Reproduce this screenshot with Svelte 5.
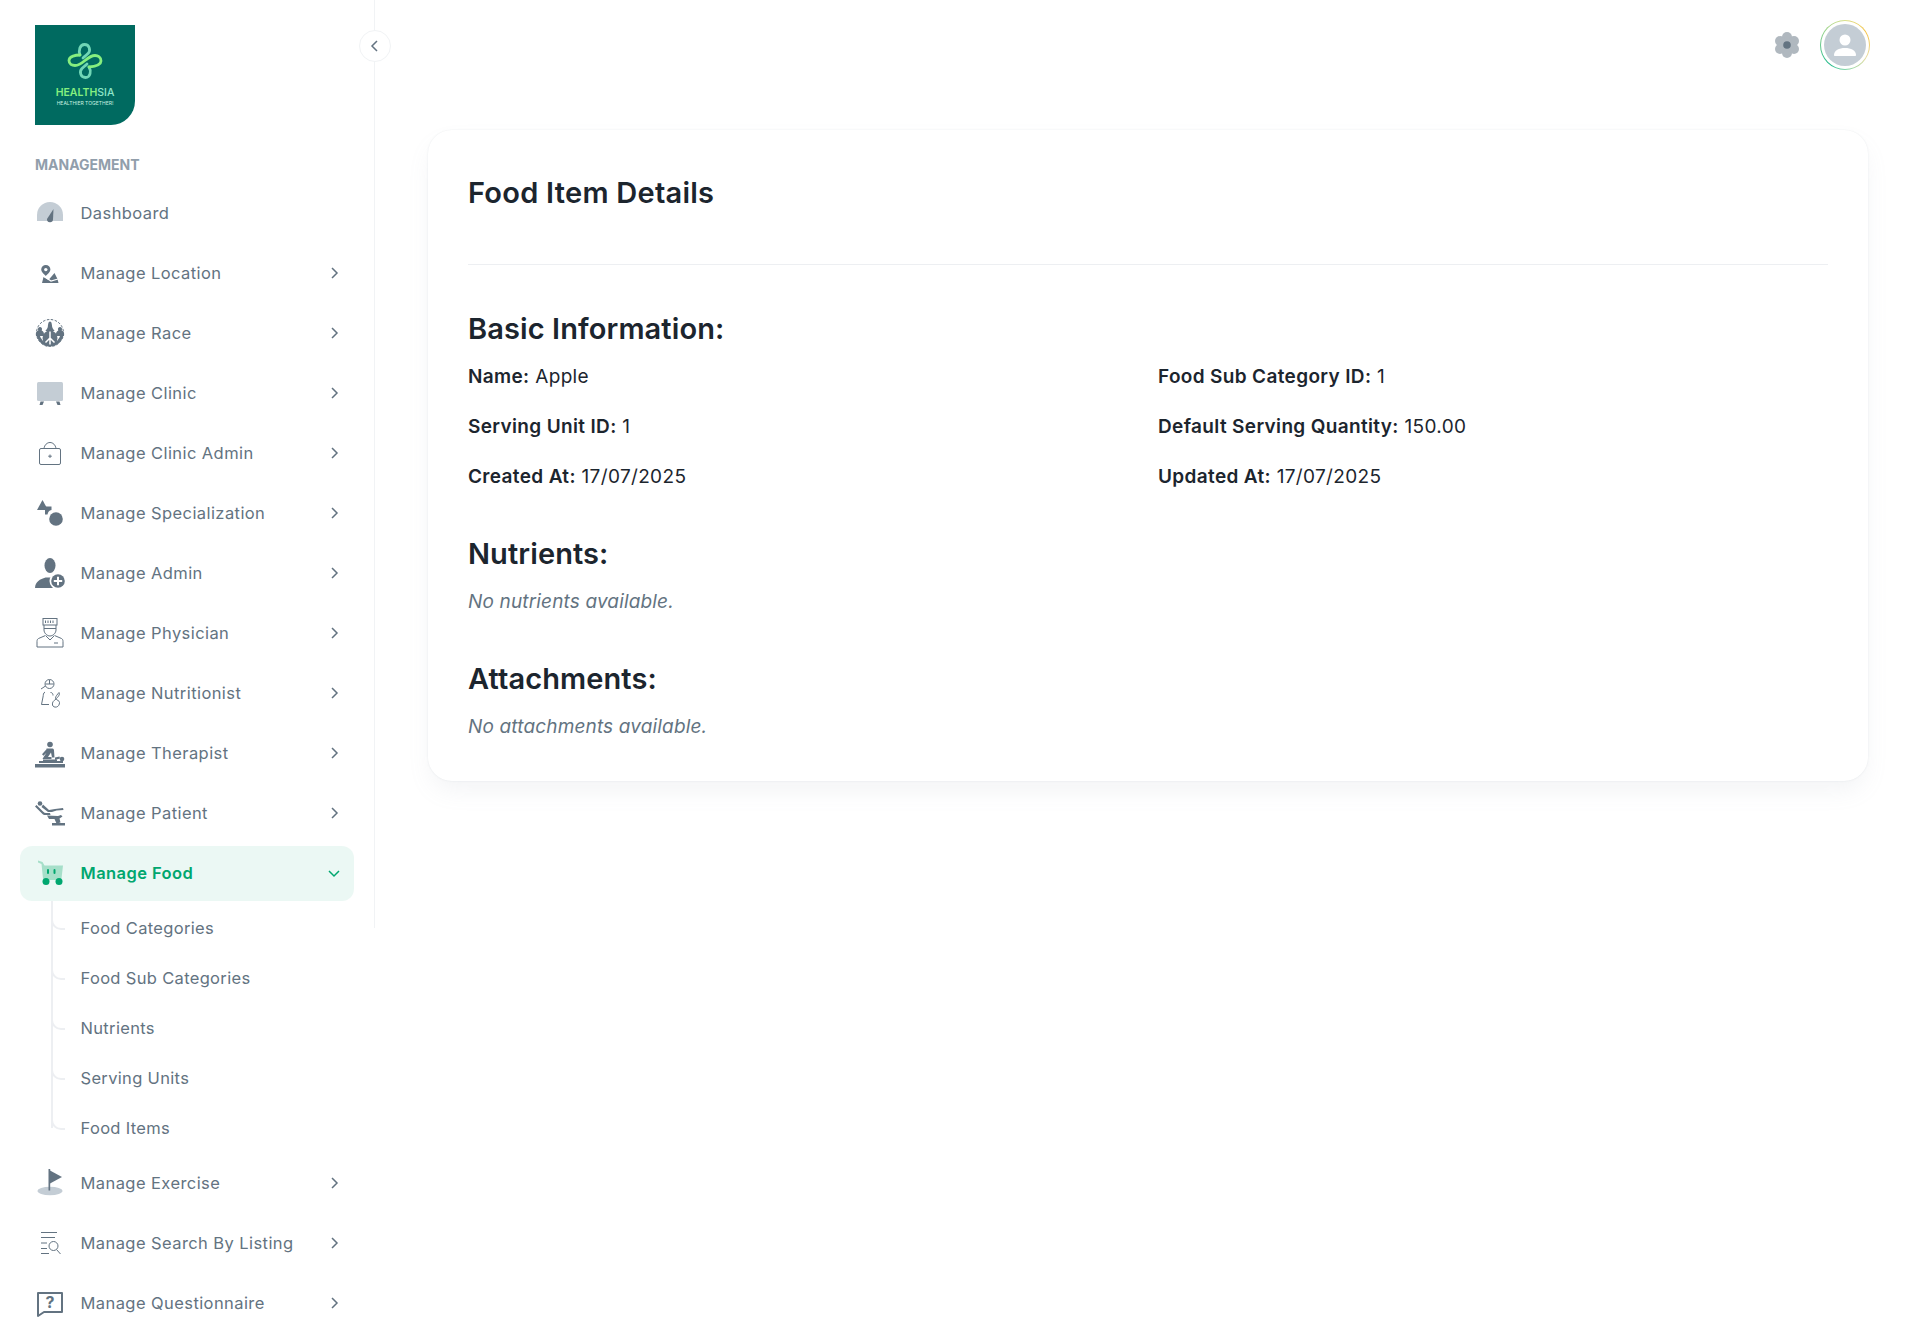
<script>
  // viewBox 0 0 30 30 for all of them, gray = duotone part, dark = main tone
  const dark = '#637381';
  const gray = '#c4cdd5';
  const icons = {
    dashboard: `<path d="M2 23v-6a13 13 0 0 1 26 0v6z" fill="${gray}"/><path d="M18.5 11l-.5 10.500a3 3 0 1 1-6-.5z" fill="${dark}"/>`,
    location: `<path d="M7 25l1.500-6 5 3 6-7 3 6 1 4z" fill="${dark}"/><path d="M10.800 7a4.600 4.600 0 0 0-4.600 4.600c0 2.800 4.600 6.400 4.600 6.400s4.600-3.600 4.600-6.400A4.600 4.600 0 0 0 10.800 7z" fill="${dark}"/><circle cx="10.800" cy="11.600" r="1.700" fill="#fff"/><path d="M7 17l9 6 7-2" fill="none" stroke="#fff" stroke-width="1.200"/>`,
    race: `<circle cx="15" cy="15" r="13.500" fill="none" stroke="${dark}" stroke-width="1" stroke-dasharray="2.500 1.500"/><path d="M1.500 15a13.500 13.500 0 0 0 27 0h-3a10.500 10.500 0 0 1-21 0z" fill="${dark}"/><path d="M10.500 13c0-1 2-2 2.300-4 .3-2.500.5-5.500 2.200-5.500s1.900 3 2.200 5.500c.3 2 2.300 3 2.300 4z" fill="${dark}"/><path d="M1 18c-.5-3 0-4.500 2.300-5.500-1-2 .3-3.500 1.700-3.500s2.700 1.500 1.700 3.500c1.800.7 2.500 2 2.300 5.500zM29 18c.5-3 0-4.500-2.300-5.500 1-2-.3-3.500-1.700-3.500s-2.700 1.500-1.700 3.500c-1.800.7-2.500 2-2.300 5.500z" fill="${dark}"/><circle cx="15" cy="20" r="7.500" fill="${dark}"/><path d="M15 13.500v13M15 20l-4.500 4.500M15 20l4.500 4.500" stroke="#fff" stroke-width="1.500" fill="none"/>`,
    clinic: `<rect x="2" y="4" width="26" height="19" rx="1.500" fill="${gray}"/><path d="M5.500 23.500h3.500l-1.500 3.500h-3zM21 23.500h3.500l1 3.500h-3z" fill="${dark}"/>`,
    clinicAdmin: `<rect x="4.500" y="10.500" width="21" height="16" rx="1.500" fill="none" stroke="${dark}" stroke-width="1"/><path d="M9 10.500c.5-3.500 3-6 6-6s5.500 2.500 6 6" fill="none" stroke="${dark}" stroke-width="1"/><path d="M15 16.500v3.500M13.200 18.200h3.600" stroke="${dark}" stroke-width="1"/>`,
    specialization: `<path d="M7.500 2l5.500 10H2z" fill="${dark}"/><path d="M10 8.500h6.500v3.500c-2.500.5-3.500 2-4 4.500H10z" fill="${dark}"/><circle cx="21" cy="21" r="6.800" fill="${dark}"/>`,
    admin: `<ellipse cx="15" cy="7.500" rx="5.500" ry="7.500" fill="${dark}"/><path d="M0 30c.5-7 5-8.500 10.500-10.500h9L24 21v9z" fill="${dark}"/><circle cx="23" cy="23" r="8.500" fill="#fff"/><circle cx="23" cy="23" r="6.800" fill="${dark}"/><path d="M23 18.800v8.400M18.800 23h8.400" stroke="#fff" stroke-width="2"/>`,
    physician: `<g fill="none" stroke="${dark}" stroke-width="1"><rect x="8" y=".5" width="14" height="6.500"/><path d="M10.500 2.500v2.500M13 2.500v2.500M15.500 2.500v2.500M18 2.500v2.500"/><path d="M9 7v5c0 3 3 6 6 6s6-3 6-6V7"/><path d="M9 10.500h12"/><path d="M10.500 17.500L3.500 20.500c-1 .5-1.500 1.500-1.500 3v5.500h26v-5.500c0-1.500-.5-2.500-1.500-3l-7-3"/><path d="M11 18l4 4 4-4M19 25h4"/></g>`,
    nutritionist: `<g fill="none" stroke="${dark}" stroke-width="1"><circle cx="14.500" cy="6" r="4.500"/><path d="M10.500 6h8M10.500 8l-4.500 3M14.500 2v4"/><path d="M10 14c-2 1-1.500 3-2 5l-1.500 7.500H14"/><path d="M15.500 14.500c2 0 2.500 1.500 2.500 3"/><path d="M24 14.500c1.500 2-1.500 5-3 6.500-2.500 2-4 3-3.500 6 .3 1.500 2 2.500 4 2 2-.5 3-2.500 3-4.500 0-2-2.500-2-4-4 0-2.500 2-4 3.500-6z"/></g>`,
    therapist: `<circle cx="15" cy="6.500" r="2.800" fill="${dark}"/><path d="M11.500 10.500h6c1 0 1.500 1 1.500 2l.5 7h-2.500l-1-5-3 4.500h3.500v2H7.500l1-1.700 3-4.500-3 3-1.500-1.500 4.500-5z" fill="${dark}"/><path d="M8 21.500h14v2H8z" fill="${dark}"/><circle cx="27" cy="21" r="2.300" fill="${dark}"/><path d="M20 19.500l4.500-1 .5 2-5 1.500z" fill="${dark}"/><path d="M0 26h30v3.500H0z" fill="${dark}"/><path d="M4 23h24v2H4z" fill="${dark}"/>`,
    patient: `<circle cx="5" cy="5.500" r="2.300" fill="${dark}"/><path d="M0 8.500l7 7c1 1 2 1.500 3.500 1.500h5l-.5-2h-4c-1 0-2-.5-3-1.500L1.500 7z" fill="${dark}"/><path d="M8 6.500L14 12l6-1 8-1 .5 2-7 .5L17 14h-4L6.500 9z" fill="${dark}"/><path d="M12 17.500l11 .5 3-1 1.500 1.500-3 2 1 4-4 1-2-4.500H14z" fill="${dark}"/><path d="M17 25h13v2.500H17z" fill="${dark}"/>`,
    food: `<path d="M3 2.500l4.500 1.500 2 3.500H28l-1.500 13c-.1 1-1 1.500-2 1.500H10c-1 0-1.700-.6-2-1.500L6.500 6 3 4.500z" fill="#a6dfc9"/><rect x="12" y="11" width="2" height="5" rx="1" fill="#00a76f"/><rect x="18.500" y="11" width="2" height="5" rx="1" fill="#00a76f"/><circle cx="11" cy="23.500" r="3.500" fill="#00a76f"/><circle cx="24" cy="23.500" r="3.500" fill="#00a76f"/>`,
    exercise: `<ellipse cx="15" cy="23" rx="12.500" ry="4.200" fill="${gray}"/><rect x="13.500" y="1" width="1.700" height="21.500" fill="${dark}"/><path d="M15 2.500l12 6.500-12 6.500z" fill="${dark}"/>`,
    listing: `<g fill="none" stroke="${dark}" stroke-width="1"><path d="M6 4.500h16M6 9.500h14M6 15h6M6 20.500h6M6 25.500h8"/><circle cx="18.500" cy="18" r="4.500" fill="#fff"/><path d="M21.500 21.500l4 4.500"/></g>`,
    question: `<path d="M3 5h24v19H9l-6 4z" fill="none" stroke="${dark}" stroke-width="2" stroke-linejoin="round"/><text x="15" y="19.500" text-anchor="middle" font-size="16" font-weight="700" font-family="Inter, sans-serif" fill="${dark}">?</text>`
  };

  const topItems = [
    { label: 'Dashboard', icon: 'dashboard', plain: true },
    { label: 'Manage Location', icon: 'location' },
    { label: 'Manage Race', icon: 'race' },
    { label: 'Manage Clinic', icon: 'clinic' },
    { label: 'Manage Clinic Admin', icon: 'clinicAdmin' },
    { label: 'Manage Specialization', icon: 'specialization' },
    { label: 'Manage Admin', icon: 'admin' },
    { label: 'Manage Physician', icon: 'physician' },
    { label: 'Manage Nutritionist', icon: 'nutritionist' },
    { label: 'Manage Therapist', icon: 'therapist' },
    { label: 'Manage Patient', icon: 'patient' }
  ];
  const foodChildren = ['Food Categories', 'Food Sub Categories', 'Nutrients', 'Serving Units', 'Food Items'];
  const bottomItems = [
    { label: 'Manage Exercise', icon: 'exercise' },
    { label: 'Manage Search By Listing', icon: 'listing' },
    { label: 'Manage Questionnaire', icon: 'question' }
  ];
  const details = [
    ['Name:', 'Apple'],
    ['Food Sub Category ID:', '1'],
    ['Serving Unit ID:', '1'],
    ['Default Serving Quantity:', '150.00'],
    ['Created At:', '17/07/2025'],
    ['Updated At:', '17/07/2025']
  ];
</script>

{#snippet navItem(item)}
  <a class="item" href="#top">
    <svg class="icon" viewBox="0 0 30 30">{@html icons[item.icon]}</svg>
    <span class="label">{item.label}</span>
    {#if !item.plain}
      <svg class="chev" viewBox="0 0 16 16"><path d="M6 3l5 5-5 5" /></svg>
    {/if}
  </a>
{/snippet}

<div class="page">
  <aside class="sidebar">
    <div class="logo">
      <svg class="mark" viewBox="0 0 36 36">
        <g fill="none" stroke-width="2.800" stroke-linecap="round" stroke-linejoin="round">
          <path d="M13 12C11.500 8 12.500 1.500 17.500 1.500S24 7.500 21 10.500 17 14 16 15" stroke="#70d6b6" />
          <path d="M22 24C24.500 28 23.500 34.500 18.500 34.500S12 28.500 15 25.500 19 22 20 21" stroke="#70d6b6" />
          <path d="M13 12C9 12 2 13 2 17.500 2 21 5 22.500 8 22.500 12 22.500 15 20 18 17.500 21 15 24 12.500 28 12.500 31 12.500 34 14.500 34 18 34 22 27 23.500 22 24" stroke="#86ef7f" />
        </g>
      </svg>
      <span class="brand"><b>HEALTH</b>SIA</span>
      <span class="tag">HEALTHIER TOGETHER!</span>
    </div>
    <div class="section">MANAGEMENT</div>
    <nav class="nav">
      {#each topItems as item}
        {@render navItem(item)}
      {/each}

      <a class="item active" href="#top">
        <svg class="icon" viewBox="0 0 30 30">{@html icons.food}</svg>
        <span class="label">Manage Food</span>
        <svg class="chev" viewBox="0 0 16 16"><path d="M3 6l5 5 5-5" /></svg>
      </a>
      <ul class="sub">
        {#each foodChildren as child}
          <li><a href="#top">{child}</a></li>
        {/each}
      </ul>

      {#each bottomItems as item}
        {@render navItem(item)}
      {/each}
    </nav>
  </aside>

  <main class="main">
    <header class="top">
      <svg class="gear" viewBox="0 0 30 30">
        <g fill="#637381" opacity="0.5">
          <circle cx="15" cy="15" r="9" />
          <circle cx="15" cy="7" r="5" />
          <circle cx="15" cy="23" r="5" />
          <circle cx="8" cy="11" r="5" />
          <circle cx="22" cy="11" r="5" />
          <circle cx="8" cy="19" r="5" />
          <circle cx="22" cy="19" r="5" />
        </g>
        <circle cx="15" cy="15" r="3.800" fill="#637381" />
      </svg>
      <div class="avatar">
        <div class="avatar-inner">
          <svg viewBox="0 0 42 42">
            <circle cx="21" cy="16" r="5.500" fill="#fff" />
            <path d="M10 31c0-4.500 5-7 11-7s11 2.500 11 7c0 .6-.4 1-1 1H11c-.6 0-1-.4-1-1z" fill="#fff" />
          </svg>
        </div>
      </div>
    </header>

    <section class="card">
      <h1>Food Item Details</h1>
      <hr />
      <h2 class="first">Basic Information:</h2>
      <div class="grid">
        {#each details as [key, value]}
          <p><strong>{key}</strong> {value}</p>
        {/each}
      </div>
      <h2 class="nutrients">Nutrients:</h2>
      <p class="empty">No nutrients available.</p>
      <h2 class="attach">Attachments:</h2>
      <p class="empty">No attachments available.</p>
    </section>
  </main>

  <button class="collapse" aria-label="Collapse sidebar">
    <svg viewBox="0 0 16 16"><path d="M10 3L5 8l5 5" /></svg>
  </button>
</div>

<style>
  :global(body) {
    margin: 0;
    background: #fff;
    font-family: Inter, "Noto Sans", sans-serif;
    color: #1c252e;
  }

  .page {
    position: relative;
    display: flex;
    height: 1331px;
    overflow: hidden;
  }

  .sidebar {
    flex: 0 0 375px;
    box-sizing: border-box;
    height: 928px;
    border-right: 1px solid #f1f3f5;
  }

  .logo {
    display: flex;
    flex-direction: column;
    align-items: center;
    box-sizing: border-box;
    width: 100px;
    height: 100px;
    margin: 25px 0 0 35px;
    padding-top: 18px;
    background: #006a60;
    border-bottom-right-radius: 24px;
    color: #8fe6c9;
  }

  .mark {
    width: 36px;
    height: 36px;
  }

  .brand {
    margin-top: 8px;
    font-size: 10.5px;
    line-height: 12px;
    font-weight: 500;
  }

  .brand b {
    color: #86ef7f;
    font-weight: 600;
  }

  .tag {
    margin-top: 0.5px;
    font-size: 5px;
    line-height: 7px;
    color: #c8f2e2;
  }

  .section {
    margin: 32px 0 0 35px;
    font-size: 14px;
    line-height: 16px;
    font-weight: 700;
    color: #919eab;
  }

  .nav {
    display: flex;
    flex-direction: column;
    margin-top: 13px;
    padding: 0 20px;
  }

  .item {
    display: flex;
    align-items: center;
    flex: 0 0 55px;
    box-sizing: border-box;
    margin-bottom: 5px;
    padding: 0 12px 2px 15px;
    border-radius: 12px;
    color: #637381;
    text-decoration: none;
  }

  .icon {
    flex: 0 0 30px;
    width: 30px;
    height: 30px;
    margin-right: 15.5px;
  }

  .label {
    flex: 1;
    font-size: 16.5px;
    letter-spacing: 0.42px;
    font-weight: 400;
    white-space: nowrap;
  }

  .chev {
    width: 16px;
    height: 16px;
    fill: none;
    stroke: #637381;
    stroke-width: 1.5;
  }

  .active {
    margin-bottom: 0;
    background: rgba(0, 167, 111, 0.08);
    color: #00a76f;
  }

  .active .label {
    font-weight: 600;
  }

  .active .chev {
    stroke: #00a76f;
  }

  .sub {
    position: relative;
    margin: 2px 0 3px;
    padding: 0;
    list-style: none;
  }

  .sub::before {
    content: '';
    position: absolute;
    left: 31px;
    top: -2px;
    bottom: 25px;
    width: 2px;
    background: #edeff2;
  }

  .sub li {
    position: relative;
    height: 50px;
    display: flex;
    align-items: center;
    padding-left: 60.5px;
    font-size: 16.5px;
    letter-spacing: 0.33px;
  }

  .sub li::before {
    content: '';
    position: absolute;
    left: 31px;
    top: 13px;
    width: 12px;
    height: 12px;
    border-left: 2px solid #edeff2;
    border-bottom: 2px solid #edeff2;
    border-bottom-left-radius: 10px;
  }

  .sub a {
    color: #637381;
    text-decoration: none;
  }

  .main {
    flex: 1;
    min-width: 0;
    padding: 0 52px 0 53px;
  }

  .top {
    display: flex;
    justify-content: flex-end;
    align-items: center;
    gap: 18px;
    height: 130px;
    box-sizing: border-box;
    margin-right: -2px;
    padding-bottom: 40px;
  }

  .gear {
    width: 30px;
    height: 30px;
  }

  .avatar {
    width: 50px;
    height: 50px;
    padding: 1px;
    box-sizing: border-box;
    border-radius: 50%;
    background: conic-gradient(#d9e08a 0deg, #f6c244 60deg, #e8dca0 120deg, #7fd6a8 180deg, #1fb98a 220deg, #8fd08a 300deg, #d9e08a 360deg);
  }

  .avatar-inner {
    display: flex;
    align-items: center;
    justify-content: center;
    width: 100%;
    height: 100%;
    background: #fff;
    border-radius: 50%;
  }

  .avatar-inner svg {
    width: 42px;
    height: 42px;
    background: #c4cdd5;
    border-radius: 50%;
  }

  .card {
    box-sizing: border-box;
    height: 651px;
    padding: 40px;
    border-radius: 24px;
    background: #fff;
    box-shadow: 0 0 2px rgba(145, 158, 171, 0.2), 0 12px 24px -4px rgba(145, 158, 171, 0.12);
  }

  h1 {
    margin: 0;
    font-size: 29px;
    letter-spacing: 0.25px;
    line-height: 46px;
    font-weight: 600;
  }

  hr {
    margin: 48px 0 0;
    border: 0;
    border-top: 1px solid #edeff2;
  }

  h2 {
    margin: 0;
    font-size: 29px;
    letter-spacing: 0.1px;
    line-height: 40px;
    font-weight: 600;
  }

  .first {
    margin-top: 44px;
  }

  .grid {
    display: grid;
    grid-template-columns: 1fr 1fr;
    column-gap: 20px;
    margin-top: 16px;
  }

  .grid p {
    margin: 0;
    height: 50px;
    font-size: 19px;
    letter-spacing: 0.35px;
    line-height: 24px;
  }

  .grid strong {
    font-weight: 600;
  }

  .nutrients {
    margin-top: 19px;
  }

  .attach {
    margin-top: 45px;
  }

  .empty {
    margin: 16px 0 0;
    font-size: 19px;
    letter-spacing: 0.15px;
    line-height: 24px;
    font-style: italic;
    color: #637381;
  }

  .collapse {
    position: absolute;
    left: 359px;
    top: 30px;
    display: flex;
    align-items: center;
    justify-content: center;
    width: 32px;
    height: 32px;
    padding: 0;
    background: #fff;
    border: 1px solid #f1f3f5;
    border-radius: 50%;
  }

  .collapse svg {
    width: 16px;
    height: 16px;
    fill: none;
    stroke: #637381;
    stroke-width: 1.5;
  }
</style>
